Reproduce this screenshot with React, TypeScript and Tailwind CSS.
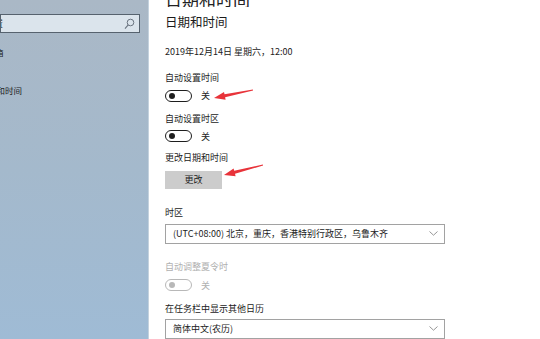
import React from 'react';

const font = { fontFamily: '"Noto Sans CJK SC", "Noto Sans", sans-serif' };

const Toggle = ({ disabled = false }: { disabled?: boolean }) => (
  <div className="flex items-center gap-[9px]">
    <div
      className={`w-[27px] h-[12px] rounded-full border-[1.5px] flex items-center ${disabled ? 'border-[#b8b8b8]' : 'border-[#1e1e1e]'}`}
    >
      <div className={`w-[6px] h-[6px] rounded-full ml-[3px] ${disabled ? 'bg-[#b8b8b8]' : 'bg-[#1e1e1e]'}`} />
    </div>
    <span className={`text-[9px] leading-none ${disabled ? 'text-[#b0b0b0]' : 'text-[#222]'}`}>关</span>
  </div>
);

const Label = ({ children, disabled = false, className = '' }: { children: React.ReactNode; disabled?: boolean; className?: string }) => (
  <div className={`h-[16px] flex items-center text-[9px] leading-none ${disabled ? 'text-[#b0b0b0]' : 'text-[#222]'} ${className}`}>
    {children}
  </div>
);

const Select = ({ text, className = '' }: { text: string; className?: string }) => (
  <div className={`w-[280px] h-[20px] shrink-0 border-[1.5px] border-[#a2a2a2] flex items-center justify-between pl-[7px] pr-[6px] ${className}`}>
    <span className="text-[9px] leading-none text-[#222] whitespace-nowrap">{text}</span>
    <svg width="9" height="5" viewBox="0 0 9 5" fill="none">
      <path d="M0.5 0.5 L4.5 4.2 L8.5 0.5" stroke="#8a8a8a" strokeWidth="0.9" />
    </svg>
  </div>
);

export default function App() {
  return (
    <div className="relative w-[540px] h-[339px] flex overflow-hidden bg-white" style={font}>
      {/* sidebar */}
      <aside className="w-[149px] shrink-0 h-full bg-gradient-to-b from-[#aab8c6] via-[#a4b9cc] to-[#9fbbd5] border-r border-[#c4d2de] overflow-hidden flex flex-col">
        <div className="mt-[14px] w-[140px] h-[19px] border border-[#56626e] bg-[#dbe4ec] flex items-center justify-between overflow-hidden">
          <span className="text-[9px] leading-none text-[#333] ml-[-7px]">置</span>
          <svg width="11" height="12" viewBox="0 0 11 12" fill="none" className="mr-[4px]">
            <circle cx="6.5" cy="4.5" r="3.3" stroke="#6a7480" strokeWidth="1" />
            <path d="M4.2 6.9 L1 10.6" stroke="#6a7480" strokeWidth="1.1" />
          </svg>
        </div>
        <div className="mt-[11px] h-[16px] flex items-center overflow-hidden">
          <span className="text-[8.5px] leading-none text-[#222] ml-[-5px]">箱</span>
        </div>
        <div className="mt-[22px] h-[16px] flex items-center overflow-hidden">
          <span className="text-[8.5px] leading-none text-[#222] ml-[-20.5px] whitespace-nowrap">日期和时间</span>
        </div>
      </aside>

      {/* main */}
      <main className="flex-1 pl-[16px] flex flex-col">
        <div className="h-[7px] overflow-hidden">
          <div className="text-[17px] leading-[17px] mt-[-10px] text-[#222] whitespace-nowrap">日期和时间</div>
        </div>
        <div className="mt-[6px] h-[20px] flex items-center text-[12.5px] leading-none text-[#1a1a1a]">日期和时间</div>
        <Label className="mt-[11px] text-[8.5px]">2019年12月14日 星期六，12:00</Label>

        <Label className="mt-[10px]">自动设置时间</Label>
        <div className="mt-[3px] h-[16px] flex items-center">
          <Toggle />
        </div>

        <Label className="mt-[7px]">自动设置时区</Label>
        <div className="mt-[2px] h-[16px] flex items-center">
          <Toggle />
        </div>

        <Label className="mt-[6px]">更改日期和时间</Label>
        <button className="mt-[5px] w-[57px] h-[19px] bg-[#cccccc] text-[9px] leading-none text-[#222] flex items-center justify-center">
          更改
        </button>

        <Label className="mt-[15px]">时区</Label>
        <Select className="mt-[4px]" text="(UTC+08:00) 北京，重庆，香港特别行政区，乌鲁木齐" />

        <Label disabled className="mt-[15px]">自动调整夏令时</Label>
        <div className="mt-[3px] h-[16px] flex items-center">
          <Toggle disabled />
        </div>

        <Label className="mt-[7px]">在任务栏中显示其他日历</Label>
        <Select className="mt-[3px]" text="简体中文(农历)" />
      </main>

      {/* annotation arrows */}
      <svg className="absolute inset-0 pointer-events-none" width="540" height="339" viewBox="0 0 540 339">
        <polygon
          fill="#e8333a"
          points="214,98 225.6,99.7 225.1,97.3 253.1,90.5 252.9,89.5 224.5,94.3 224,91.9"
        />
        <polygon
          fill="#e8333a"
          points="224,175 235.6,176.2 235,173.8 263.1,165.5 262.9,164.5 234.2,170.8 233.6,168.4"
        />
      </svg>
    </div>
  );
}
